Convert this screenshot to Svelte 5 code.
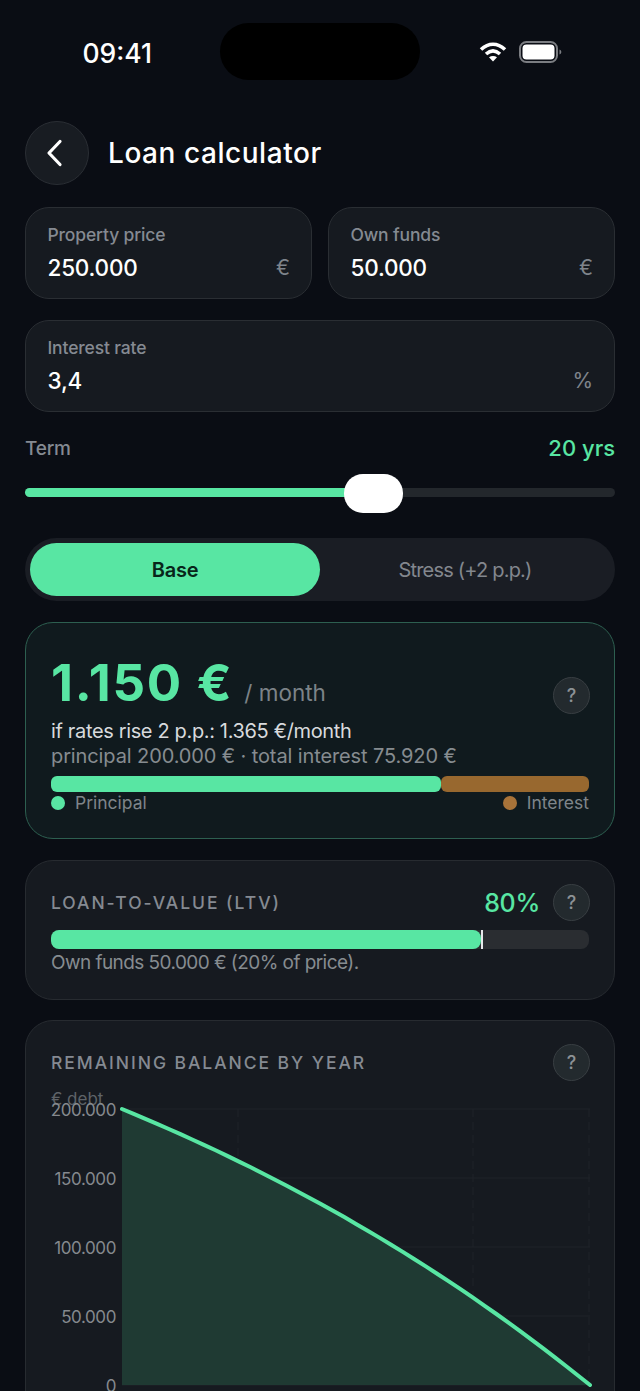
<script lang="ts">
    const price = 250000;
    const principal = 200000;
    const rate = 0.034 / 12;
    const monthly = 1150;

    // plot area inside the chart svg (card is 590 wide, svg starts near its left edge)
    const left = 96;
    const right = 564;
    const top = 18;
    const bottom = 294;

    const ticks = [200000, 150000, 100000, 50000, 0];
    const fmt = (n: number) => n.toLocaleString("de-DE");
    const yOf = (v: number) => bottom - (v / principal) * (bottom - top);
    const verticals = [212, 447, 563];

    function balance(m: number) {
        const g = Math.pow(1 + rate, m);
        return Math.max(0, principal * g - (monthly * (g - 1)) / rate);
    }

    let points: string[] = [];
    for (let i = 0; i <= 40; i++) {
        const t = i / 40;
        const x = left + t * (right - left);
        const v = i === 40 ? 0 : balance(t * 240);
        points.push(x.toFixed(1) + "," + yOf(v).toFixed(1));
    }
    const line = points.join(" ");
    const area = line + ` ${right},${bottom} ${left},${bottom}`;
</script>

<div class="screen">
    <div class="status">
        <span class="time">09:41</span>
        <div class="island"></div>
        <div class="status-icons">
            <svg width="28" height="20" viewBox="0 0 28 20">
                <path d="M2 7.5C9.5 0.5 18.5 0.5 26 7.5" class="wifi" />
                <path d="M7 12C11.5 8 16.5 8 21 12" class="wifi" />
                <path d="M14 19.5L10 15.3C12.4 13.4 15.6 13.4 18 15.3Z" fill="#fff" />
            </svg>
            <svg width="43" height="22" viewBox="0 0 43 22">
                <rect x="1" y="1" width="37" height="20" rx="6.5" fill="none" stroke="#7b7d82" stroke-width="2" />
                <rect x="3.5" y="3.5" width="32" height="15" rx="4" fill="#fff" />
                <path d="M40.5 8.5c1.3.4 1.8 1.3 1.8 2.5s-.5 2.1-1.8 2.5z" fill="#7b7d82" />
            </svg>
        </div>
    </div>

    <header class="topbar">
        <button class="back" aria-label="Back">
            <svg width="20" height="28" viewBox="0 0 20 28">
                <path d="M15 2.500L4 14L15 25.500" fill="none" stroke="#fff" stroke-width="3.200" stroke-linecap="round" stroke-linejoin="round" />
            </svg>
        </button>
        <h1>Loan calculator</h1>
    </header>

    <div class="fields">
        <div class="field">
            <span class="field-label">Property price</span>
            <div class="field-row"><span class="field-value">250.000</span><span class="unit">€</span></div>
        </div>
        <div class="field">
            <span class="field-label">Own funds</span>
            <div class="field-row"><span class="field-value">50.000</span><span class="unit">€</span></div>
        </div>
        <div class="field wide">
            <span class="field-label">Interest rate</span>
            <div class="field-row"><span class="field-value">3,4</span><span class="unit">%</span></div>
        </div>
    </div>

    <div class="term">
        <span class="term-label">Term</span>
        <span class="term-value">20 yrs</span>
    </div>

    <div class="slider">
        <div class="slider-fill"></div>
        <div class="slider-thumb"></div>
    </div>

    <div class="segments">
        <div class="segment active">Base</div>
        <div class="segment">Stress (+2 p.p.)</div>
    </div>

    <section class="card primary">
        <div class="headline">
            <div class="amount"><strong>1.150 €</strong><span>/ month</span></div>
            <button class="help">?</button>
        </div>
        <p class="stress">if rates rise 2 p.p.: 1.365 €/month</p>
        <p class="muted">principal 200.000 € · total interest 75.920 €</p>
        <div class="split">
            <div class="split-principal"></div>
            <div class="split-interest"></div>
        </div>
        <div class="legend">
            <span class="legend-item"><i class="dot green"></i>Principal</span>
            <span class="legend-item"><i class="dot brown"></i>Interest</span>
        </div>
    </section>

    <section class="card ltv">
        <div class="card-head">
            <h2>LOAN-TO-VALUE (LTV)</h2>
            <div class="ltv-right">
                <span class="ltv-value">80%</span>
                <button class="help">?</button>
            </div>
        </div>
        <div class="ltv-bar">
            <div class="ltv-fill" style="width: {(principal / price) * 100}%"></div>
            <div class="ltv-tick"></div>
        </div>
        <p class="ltv-note">Own funds 50.000 € (20% of price).</p>
    </section>

    <section class="card chart">
        <div class="card-head">
            <h2>REMAINING BALANCE BY YEAR</h2>
            <button class="help">?</button>
        </div>
        <svg class="plot" width="588" height="320" viewBox="0 0 588 320">
            <text x="25" y="14" class="axis-name">€ debt</text>
            {#each ticks as t}
                <line x1={left} x2={right} y1={yOf(t)} y2={yOf(t)} class="grid" />
            {/each}
            {#each verticals as x}
                <line x1={x} x2={x} y1={top} y2={bottom} class="grid dashed" />
            {/each}
            <polygon points={area} fill="#1f3a33" />
            <polyline points={line} class="curve" />
            {#each ticks as t}
                <text x="90" y={yOf(t) + 6.500} text-anchor="end" class="tick">{fmt(t)}</text>
            {/each}
        </svg>
    </section>
</div>

<style>
    :global(body) {
        margin: 0;
        background: #0a0d14;
    }

    .screen {
        width: 640px;
        height: 1391px;
        box-sizing: border-box;
        padding: 0 25px;
        overflow: hidden;
        background: #0a0d14;
        color: #fff;
        font-family: Inter, "Liberation Sans", sans-serif;
        display: flex;
        flex-direction: column;
    }

    .status {
        height: 121px;
        flex: none;
        display: flex;
        position: relative;
    }

    .time {
        position: absolute;
        left: 57.500px;
        top: 35px;
        font-size: 26.500px;
        line-height: 36px;
        font-weight: 500;
    }

    .island {
        position: absolute;
        left: 195px;
        top: 23px;
        width: 200px;
        height: 57px;
        border-radius: 29px;
        background: #000;
    }

    .status-icons {
        position: absolute;
        left: 454px;
        top: 41px;
        display: flex;
        gap: 12px;
        align-items: center;
    }

    .wifi {
        fill: none;
        stroke: #fff;
        stroke-width: 3.600;
    }

    .topbar {
        display: flex;
        align-items: center;
        gap: 19px;
        height: 64px;
        flex: none;
    }

    .back {
        width: 64px;
        height: 64px;
        padding: 0 4px 0 0;
        border-radius: 50%;
        background: #181c22;
        border: 1px solid #2a2e34;
        display: flex;
        align-items: center;
        justify-content: center;
    }

    h1 {
        margin: 0;
        font-size: 28px;
        font-weight: 500;
        letter-spacing: 0.550px;
    }

    .fields {
        display: grid;
        grid-template-columns: 287px 287px;
        gap: 21px 16px;
        margin-top: 22px;
    }

    .field {
        height: 92px;
        box-sizing: border-box;
        padding: 16px 21px 0 21.500px;
        background: #161a20;
        border: 1px solid #2a2e33;
        border-radius: 24px;
    }

    .wide {
        grid-column: span 2;
    }

    .field-label {
        display: block;
        font-size: 17.500px;
        line-height: 22px;
        font-weight: 500;
        letter-spacing: -0.150px;
        color: #858a92;
    }

    .field-row {
        display: flex;
        justify-content: space-between;
        align-items: center;
        margin-top: 6px;
        line-height: 32px;
    }

    .field-value {
        font-size: 22.500px;
        font-weight: 500;
        letter-spacing: -0.2px;
    }

    .unit {
        font-size: 21px;
        color: #7f848b;
    }

    .term {
        display: flex;
        justify-content: space-between;
        align-items: center;
        margin-top: 20px;
        height: 32px;
        padding-top: 3px;
    }

    .term-label {
        font-size: 19px;
        font-weight: 500;
        letter-spacing: -0.2px;
        color: #858a92;
    }

    .term-value {
        font-size: 22px;
        font-weight: 500;
        color: #58e6a3;
    }

    .slider {
        position: relative;
        height: 9px;
        margin-top: 27px;
        background: #23272c;
        border-radius: 5px;
        flex: none;
    }

    .slider-fill {
        width: 340px;
        height: 100%;
        background: #58e6a3;
        border-radius: 5px;
    }

    .slider-thumb {
        position: absolute;
        left: 319px;
        top: -14px;
        width: 59px;
        height: 39px;
        border-radius: 19px;
        background: #fff;
    }

    .segments {
        display: grid;
        grid-template-columns: 290px 1fr;
        height: 63px;
        box-sizing: border-box;
        padding: 5px;
        margin-top: 41px;
        background: #1a1d24;
        border-radius: 32px;
        flex: none;
    }

    .segment {
        display: flex;
        align-items: center;
        justify-content: center;
        font-size: 20px;
        letter-spacing: -0.8px;
        color: #83878e;
    }

    .active {
        background: #58e6a3;
        border-radius: 27px;
        color: #08251a;
        font-weight: 600;
        letter-spacing: -0.2px;
    }

    .card {
        box-sizing: border-box;
        background: #161a20;
        border: 1px solid #272b30;
        border-radius: 28px;
        padding: 0 25px;
        flex: none;
    }

    p {
        margin: 0;
    }

    .primary {
        height: 217px;
        margin-top: 21px;
        background: #101a1e;
        border-color: #2d5f50;
        padding-top: 28px;
    }

    .headline {
        display: flex;
        justify-content: space-between;
        align-items: flex-end;
        height: 63px;
    }

    .amount {
        display: flex;
        align-items: baseline;
        gap: 11px;
    }

    .amount strong {
        font-size: 51px;
        line-height: 62px;
        font-weight: 700;
        letter-spacing: 1.700px;
        color: #58e6a3;
    }

    .amount span {
        font-size: 22.500px;
        color: #7c8388;
    }

    .stress {
        margin-top: 5px;
        font-size: 20px;
        line-height: 25px;
        letter-spacing: -0.350px;
        color: #d8dadd;
    }

    .muted {
        font-size: 20px;
        line-height: 25px;
        letter-spacing: -0.110px;
        color: #868c90;
    }

    .split {
        display: flex;
        height: 16px;
        margin-top: 7px;
    }

    .split-principal {
        width: 390px;
        background: #58e6a3;
        border-radius: 6px;
    }

    .split-interest {
        flex: 1;
        background: #98682f;
        border-radius: 6px;
    }

    .legend {
        display: flex;
        justify-content: space-between;
        font-size: 17.500px;
        line-height: 22px;
        color: #7f858a;
    }

    .legend-item {
        display: flex;
        align-items: center;
        gap: 10px;
    }

    .dot {
        width: 14px;
        height: 14px;
        border-radius: 50%;
    }

    .green {
        background: #58e6a3;
    }

    .brown {
        background: #a87339;
    }

    .help {
        width: 37px;
        height: 37px;
        padding: 0;
        margin-right: -1px;
        flex: none;
        border-radius: 50%;
        background: #232a2e;
        border: 1px solid #383e42;
        color: #8d9296;
        font: 500 18px Inter, sans-serif;
    }

    .card-head {
        display: flex;
        justify-content: space-between;
        align-items: center;
        height: 37px;
    }

    h2 {
        margin: 0;
        font-size: 17.500px;
        font-weight: 500;
        letter-spacing: 1.950px;
        color: #858a92;
    }

    .ltv {
        height: 140px;
        margin-top: 21px;
        padding-top: 23px;
    }

    .ltv-right {
        display: flex;
        align-items: center;
        gap: 13px;
    }

    .ltv-value {
        font-size: 25px;
        font-weight: 500;
        letter-spacing: -0.300px;
        color: #58e6a3;
    }

    .ltv-bar {
        position: relative;
        height: 19px;
        margin-top: 9px;
        background: #2a2d31;
        border-radius: 8px;
    }

    .ltv-fill {
        height: 100%;
        background: #58e6a3;
        border-radius: 8px;
    }

    .ltv-tick {
        position: absolute;
        left: 430px;
        top: 0;
        width: 2px;
        height: 100%;
        background: #e6e8ea;
    }

    .ltv-note {
        margin-top: 1px;
        font-size: 19px;
        line-height: 25px;
        letter-spacing: -0.560px;
        color: #868c90;
    }

    .chart {
        height: 420px;
        margin-top: 20px;
        padding-top: 23px;
    }

    .plot {
        display: block;
        margin: 10px 0 0 -25px;
        overflow: visible;
    }

    .axis-name {
        font-size: 17px;
        fill: #5e6368;
    }

    .tick {
        font-size: 17px;
        letter-spacing: -0.400px;
        fill: #85898e;
    }

    .grid {
        stroke: #1f2328;
        stroke-width: 1;
    }

    .dashed {
        stroke-dasharray: 8 5;
    }

    .curve {
        fill: none;
        stroke: #58e6a3;
        stroke-width: 4;
        stroke-linecap: round;
        stroke-linejoin: round;
    }
</style>
